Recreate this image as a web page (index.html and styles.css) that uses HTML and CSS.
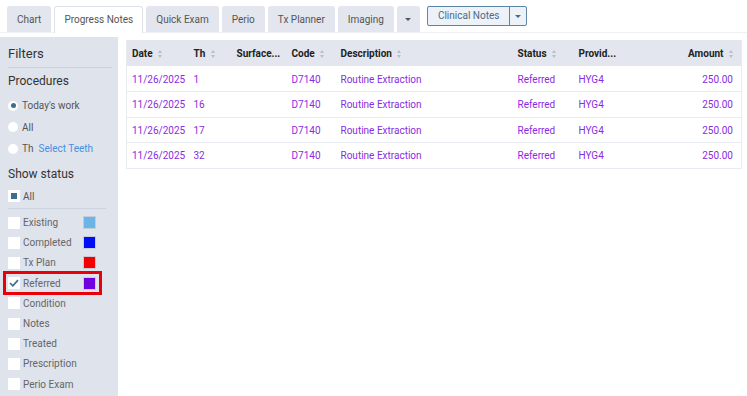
FILE: index.html
```html
<!DOCTYPE html>
<html>
<head>
<meta charset="utf-8">
<link rel="stylesheet" href="styles.css">
</head>
<body>
<div class="tabbar">
  <div class="tab">Chart</div>
  <div class="tab active">Progress Notes</div>
  <div class="tab">Quick Exam</div>
  <div class="tab">Perio</div>
  <div class="tab">Tx Planner</div>
  <div class="tab">Imaging</div>
  <div class="tab caret-tab"><span class="caret"></span></div>
  <div class="btn-group">
    <div class="btn">Clinical Notes</div>
    <div class="btn btn-caret"><span class="caret"></span></div>
  </div>
</div>
<div class="main">
  <aside class="sidebar">
    <div class="title">Filters</div>
    <div class="section">Procedures</div>
    <div class="radio-row"><span class="radio on"></span>Today's work</div>
    <div class="radio-row"><span class="radio"></span>All</div>
    <div class="radio-row"><span class="radio"></span>Th <a class="link">Select Teeth</a></div>
    <div class="section second">Show status</div>
    <div class="check-row all"><span class="check filled"></span>All</div>
    <div class="divider"></div>
    <div class="status-list">
      <div class="check-row"><span class="check"></span><span class="lbl">Existing</span><span class="swatch sw-existing"></span></div>
      <div class="check-row"><span class="check"></span><span class="lbl">Completed</span><span class="swatch sw-completed"></span></div>
      <div class="check-row"><span class="check"></span><span class="lbl">Tx Plan</span><span class="swatch sw-txplan"></span></div>
      <div class="check-row highlight"><span class="check checked"><svg width="10" height="8" viewBox="0 0 10 8"><path d="M1 4 L3.8 6.8 L9 1.2" fill="none" stroke="#3d6d8f" stroke-width="1.7"/></svg></span><span class="lbl">Referred</span><span class="swatch sw-referred"></span></div>
      <div class="check-row"><span class="check"></span><span class="lbl">Condition</span></div>
      <div class="check-row"><span class="check"></span><span class="lbl">Notes</span></div>
      <div class="check-row"><span class="check"></span><span class="lbl">Treated</span></div>
      <div class="check-row"><span class="check"></span><span class="lbl">Prescription</span></div>
      <div class="check-row"><span class="check"></span><span class="lbl">Perio Exam</span></div>
    </div>
  </aside>
  <section class="content">
    <table class="grid">
      <colgroup>
        <col class="c-date"><col class="c-th"><col class="c-surf"><col class="c-code"><col class="c-desc"><col class="c-status"><col class="c-prov"><col class="c-amt">
      </colgroup>
      <thead>
        <tr>
          <th>Date <span class="sort"></span></th>
          <th>Th <span class="sort"></span></th>
          <th>Surface...</th>
          <th>Code <span class="sort"></span></th>
          <th>Description <span class="sort"></span></th>
          <th>Status <span class="sort"></span></th>
          <th>Provid...</th>
          <th class="num">Amount <span class="sort"></span></th>
        </tr>
      </thead>
      <tbody>
        <tr><td>11/26/2025</td><td>1</td><td></td><td>D7140</td><td>Routine Extraction</td><td>Referred</td><td>HYG4</td><td class="num">250.00</td></tr>
        <tr><td>11/26/2025</td><td>16</td><td></td><td>D7140</td><td>Routine Extraction</td><td>Referred</td><td>HYG4</td><td class="num">250.00</td></tr>
        <tr><td>11/26/2025</td><td>17</td><td></td><td>D7140</td><td>Routine Extraction</td><td>Referred</td><td>HYG4</td><td class="num">250.00</td></tr>
        <tr><td>11/26/2025</td><td>32</td><td></td><td>D7140</td><td>Routine Extraction</td><td>Referred</td><td>HYG4</td><td class="num">250.00</td></tr>
      </tbody>
    </table>
  </section>
</div>
</body>
</html>
```

FILE: styles.css
```css
* { box-sizing: border-box; }
html, body { margin: 0; padding: 0; background: #fff; }
body {
  font-family: Roboto, "Liberation Sans", sans-serif;
  font-size: 10px;
  color: #555;
  width: 747px;
  height: 396px;
  overflow: hidden;
}

/* tabs */
.tabbar {
  display: flex;
  align-items: flex-start;
  gap: 3px;
  padding: 6px 0 0 7px;
  height: 33px;
  border-bottom: 1px solid #eef0f4;
}
.tab {
  height: 26px;
  line-height: 26px;
  padding: 0 9px;
  background: #e3e6ee;
  border: 1px solid #e3e6ee;
  border-bottom: none;
  border-radius: 3px 3px 0 0;
  color: #555;
  font-size: 10px;
}
.tab.active {
  background: #fff;
  border-color: #dde1e8;
  height: 27px;
  padding: 0 9px;
}
.caret-tab { width: 23px; padding: 0; display: flex; align-items: center; justify-content: center; }
.caret {
  display: inline-block;
  width: 0; height: 0;
  border-left: 3px solid transparent;
  border-right: 3px solid transparent;
  border-top: 3px solid #555;
}
.btn-group {
  display: flex;
  margin-left: 4px;
  height: 20px;
  border: 1px solid #5d86a5;
  border-radius: 2px;
  background: #edf1f8;
}
.btn {
  line-height: 18px;
  padding: 0 10px;
  color: #4a6a88;
  font-size: 10px;
}
.btn-caret {
  padding: 0;
  width: 17px;
  border-left: 1px solid #5d86a5;
  display: flex; align-items: center; justify-content: center;
}
.btn-caret .caret { border-top-color: #4a6a88; }

/* main */
.main {
  display: flex;
  margin-top: 4px;
  height: 359px;
}
.sidebar {
  width: 118px;
  flex: none;
  background: #dfe3ec;
  padding: 7px 6px 0 8px;
}
.title {
  font-size: 13px;
  color: #333;
  line-height: 20px;
  padding-bottom: 3px;
  border-bottom: 1px solid #ccd2dd;
}
.section {
  font-size: 12px;
  color: #333;
  line-height: 18px;
  margin-top: 4px;
  margin-bottom: 5px;
}
.section.second { margin-top: 5px; margin-bottom: 3px; }
.radio-row {
  display: flex;
  align-items: center;
  height: 21.5px;
  font-size: 10px;
  color: #555;
}
.radio {
  width: 10px; height: 10px;
  border-radius: 50%;
  background: #fff;
  margin-right: 4px;
  display: flex; align-items: center; justify-content: center;
}
.radio.on::after {
  content: "";
  width: 5px; height: 5px; border-radius: 50%;
  background: #3d6d8f;
}
.link { color: #4a90e2; margin-left: 5px; }
.check-row {
  display: flex;
  align-items: center;
  height: 20.2px;
  font-size: 10px;
  color: #666;
}
.check {
  width: 12px; height: 12px;
  background: #fff;
  margin-right: 3px;
  flex: none;
  display: flex; align-items: center; justify-content: center;
}
.check.filled::after {
  content: ""; width: 6px; height: 6px; background: #3d6d8f;
}
.check-row.all { height: 21px; color: #555; }
.check-row:first-child { margin-top: -1px; }
.divider { border-bottom: 1px solid #cdd3de; margin: 1px 6px 5px 0; }
.lbl { width: 60px; }
.swatch {
  width: 13px; height: 13px;
  border: 1px solid #c8ccd6;
}
.sw-existing { background: #6ab4e8; }
.sw-completed { background: #0010f5; }
.sw-txplan { background: #f40000; }
.sw-referred { background: #7000e0; }
.check-row.highlight {
  outline: 3px solid #e8000b;
  outline-offset: -1px;
  margin: 0 12px 0 -3px;
  padding-left: 3px;
  position: relative;
}

/* table */
.content {
  flex: 1;
  padding: 3px 6px 0 8px;
}
.grid {
  width: 615px;
  border-collapse: collapse;
  table-layout: fixed;
  border-left: 1px solid #e8ebf1;
  border-right: 1px solid #e8ebf1;
}
.c-date { width: 62px; }
.c-th { width: 43px; }
.c-surf { width: 55px; }
.c-code { width: 49px; }
.c-desc { width: 177px; }
.c-status { width: 61px; }
.c-prov { width: 70px; }
.c-amt { width: 98px; }
th {
  background: #e3e6ee;
  height: 26px;
  text-align: left;
  font-weight: bold;
  font-size: 10px;
  color: #222;
  padding: 0 0 0 5px;
  white-space: nowrap;
  overflow: hidden;
}
td {
  height: 25.5px;
  font-size: 10px;
  color: #8a2be2;
  padding: 1px 0 0 5px;
  border-bottom: 1px solid #e8ebf1;
  white-space: nowrap;
}
.num { text-align: right; padding-right: 8px; }
th.num { padding-right: 7px; }
.sort {
  display: inline-block;
  width: 5px; height: 8px;
  margin-left: 3px;
  vertical-align: -1px;
  position: relative;
}
.sort::before, .sort::after {
  content: "";
  position: absolute;
  left: 0;
  border-left: 2.5px solid transparent;
  border-right: 2.5px solid transparent;
}
.sort::before { top: 0; border-bottom: 3px solid #b8bec9; }
.sort::after { bottom: 0; border-top: 3px solid #b8bec9; }
```
